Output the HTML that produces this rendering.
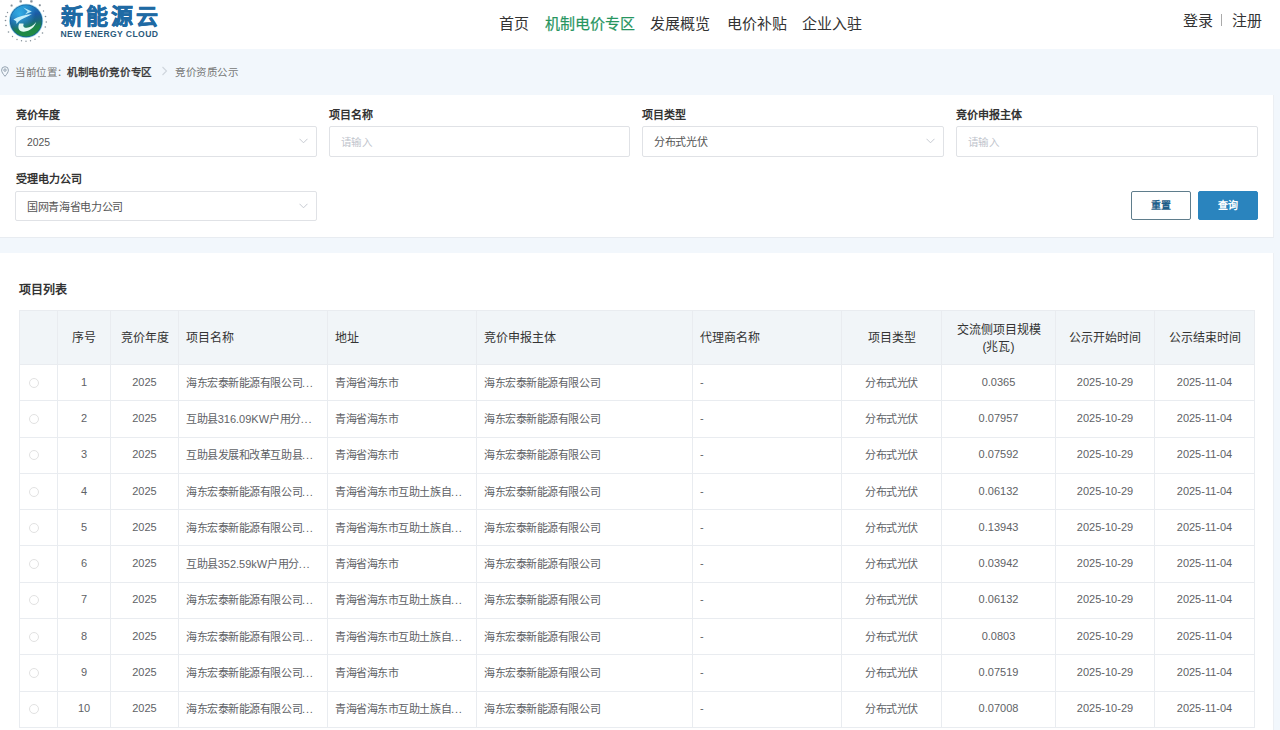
<!DOCTYPE html>
<html lang="zh-CN">
<head>
<meta charset="utf-8">
<style>
*{box-sizing:border-box;margin:0;padding:0}
html,body{width:1280px;height:730px;overflow:hidden}
body{font-family:"Liberation Sans",sans-serif;background:#f2f7fc;color:#333;position:relative}
.abs{position:absolute}
#hdr{position:absolute;left:0;top:0;width:1280px;height:49px;background:#fff}
.logo-cn{position:absolute;left:61px;top:2.5px;font-size:22px;font-weight:900;color:#1f6aa4;letter-spacing:3px;-webkit-text-stroke:0.5px #1f6aa4;line-height:28px;white-space:nowrap}
.logo-en{position:absolute;left:60.5px;top:27.5px;font-size:8.6px;font-weight:bold;color:#2b5a7c;letter-spacing:0.4px;line-height:12px;white-space:nowrap}
.nav{position:absolute;top:14px;font-size:15px;line-height:20px;color:#333;white-space:nowrap}
.nav.on{color:#27955f;-webkit-text-stroke:0.2px #27955f}
.login{position:absolute;top:11px;font-size:15px;line-height:20px;color:#333;white-space:nowrap}
.crumb{position:absolute;top:63.5px;font-size:10.5px;letter-spacing:0.6px;line-height:16px;white-space:nowrap}
#card1{position:absolute;left:0;top:95px;width:1274px;height:143px;background:#fff;border-right:1px solid #eceff3;border-bottom:1px solid #e8ecf1}
#card2{position:absolute;left:0;top:253px;width:1274px;height:480px;background:#fff;border-right:1px solid #eceff3}
.lbl{position:absolute;font-size:11px;font-weight:bold;color:#333;line-height:14px;white-space:nowrap}
.inp{position:absolute;height:31px;border:1px solid #e0e2e6;border-radius:2px;background:#fff;font-size:11px;color:#555;line-height:29px;padding-left:11px;padding-top:1px;white-space:nowrap}
.inp.ph{color:#c0c4cc;font-size:10.5px;letter-spacing:0.3px}
.arr{position:absolute;right:8px;top:11px;width:9px;height:6px}
.btn{position:absolute;top:191px;height:29px;width:60px;border-radius:2px;font-size:10px;font-weight:bold;text-align:center;line-height:27px}
#tbl{position:absolute;left:19px;top:310px;border-collapse:collapse;table-layout:fixed;font-size:11px;color:#606266}
.z{letter-spacing:-0.45px}
.dots{letter-spacing:0.8px}
#tbl td,#tbl th{border:1px solid #e9ecf0;white-space:nowrap;overflow:hidden;padding:0 7px}
#tbl th{background:#f1f5f8;height:54px;padding-top:2.5px;font-weight:normal;color:#333;font-size:12px;line-height:17px}
#tbl td{height:36.3px;padding-bottom:2px}
.c{text-align:center}
.l{text-align:left}
.radio{display:inline-block;width:10px;height:10px;border:1px solid #e2e2e2;border-radius:50%;vertical-align:middle;margin-left:-10px}
</style>
</head>
<body>
<div id="hdr">
  <svg class="abs" style="left:0px;top:0px" width="52" height="48" viewBox="0 0 52 48">
    <defs>
      <linearGradient id="lg" x1="0.2" y1="0" x2="0.45" y2="1">
        <stop offset="0" stop-color="#2196d4"/>
        <stop offset="0.4" stop-color="#1b5aa4"/>
        <stop offset="0.6" stop-color="#1a6682"/>
        <stop offset="0.8" stop-color="#1d8646"/>
        <stop offset="1" stop-color="#1f8c45"/>
      </linearGradient>
      <radialGradient id="rg" cx="0.3" cy="0.28" r="0.5">
        <stop offset="0" stop-color="#35b4ea" stop-opacity="0.9"/>
        <stop offset="1" stop-color="#35b4ea" stop-opacity="0"/>
      </radialGradient>
    </defs>
    <g fill="#6f7d88" opacity="0.85">
      <rect x="19.5" y="0.2" width="2.4" height="2.2" rx="0.6"/><rect x="30.2" y="0.2" width="2.4" height="2.2" rx="0.6"/>
      <rect x="10.6" y="4.6" width="2" height="2" rx="0.6"/><rect x="38.8" y="4.2" width="2" height="2" rx="0.6"/>
      <circle cx="7.5" cy="12.5" r="0.7"/><circle cx="43.5" cy="11" r="0.7"/>
      <circle cx="6" cy="16.5" r="0.8"/><circle cx="45.5" cy="16.5" r="0.8"/>
      <circle cx="5.5" cy="20.5" r="0.8"/><circle cx="46.3" cy="22" r="0.8"/>
      <circle cx="6" cy="25.5" r="0.8"/><circle cx="45.3" cy="27" r="0.8"/>
      <circle cx="8.5" cy="32" r="0.8"/><circle cx="42.5" cy="33" r="0.8"/>
      <circle cx="12.5" cy="36.5" r="0.7"/><circle cx="39" cy="36.8" r="0.7"/>
      <circle cx="17" cy="39.5" r="0.7"/><circle cx="21.5" cy="40.8" r="0.7"/><circle cx="26" cy="41.2" r="0.7"/><circle cx="30.5" cy="40.8" r="0.7"/><circle cx="35" cy="39.3" r="0.7"/>
    </g>
    <circle cx="26.1" cy="20.9" r="17.1" fill="#a6dcec"/>
    <circle cx="26.1" cy="20.9" r="16.3" fill="#1a5f9c"/>
    <circle cx="26.1" cy="20.9" r="15.6" fill="url(#lg)"/>
    <circle cx="26.1" cy="20.9" r="15.6" fill="url(#rg)"/>
    <path d="M23.3 7.6 L31.8 11.6 L25 14.6 L27.6 11.6 Z" fill="#b4e9f7"/>
    <path d="M13.4 19.6 C18 16.6 25 14.9 31.8 14.1 C28.3 16.6 24.3 17.6 21.3 19.6 C19.3 20.9 17.8 22.4 16.6 24 L16.2 21.3 Z" fill="#c4effa"/>
    <path d="M19.2 23.6 C17.2 28 19 32 24 31.7 C29.8 31.2 34.8 27 36.2 22 C33.2 25.6 30 27.6 26.8 27.8 C23.6 28 22.6 26 23.8 23.8 C22.2 23.4 20.6 23.3 19.2 23.6 Z" fill="#e4faf4"/>
  </svg>
  <div class="logo-cn">新能源云</div>
  <div class="logo-en">NEW ENERGY CLOUD</div>
  <div class="nav" style="left:499px">首页</div>
  <div class="nav on" style="left:545px">机制电价专区</div>
  <div class="nav" style="left:650px">发展概览</div>
  <div class="nav" style="left:727px">电价补贴</div>
  <div class="nav" style="left:802px">企业入驻</div>
  <div class="login" style="left:1183px">登录</div>
  <div class="abs" style="left:1221px;top:14px;width:1px;height:12px;background:#aaa"></div>
  <div class="login" style="left:1232px">注册</div>
</div>

<svg class="abs" style="left:1.2px;top:65.5px" width="8" height="11" viewBox="0 0 8 11">
  <path d="M4 10.3 C2 8 0.6 6 0.6 4.1 A3.4 3.4 0 0 1 7.4 4.1 C7.4 6 6 8 4 10.3 Z" fill="none" stroke="#8a9aa8" stroke-width="0.9"/>
  <circle cx="4" cy="4.1" r="1.2" fill="none" stroke="#8a9aa8" stroke-width="0.9"/>
</svg>
<div class="crumb" style="left:15px;color:#777">当前位置：</div>
<div class="crumb" style="left:67px;color:#333;-webkit-text-stroke:0.35px #333">机制电价竞价专区</div>
<svg class="abs" style="left:161px;top:66px" width="8" height="10" viewBox="0 0 8 10"><path d="M1.5 1 L5.5 5 L1.5 9" fill="none" stroke="#cfd5dc" stroke-width="1.1"/></svg>
<div class="crumb" style="left:175px;color:#777">竞价资质公示</div>

<div id="card1"></div>
<div class="lbl" style="left:15.6px;top:108px">竞价年度</div>
<div class="lbl" style="left:329px;top:108px">项目名称</div>
<div class="lbl" style="left:642px;top:108px">项目类型</div>
<div class="lbl" style="left:956px;top:108px">竞价申报主体</div>
<div class="lbl" style="left:15.6px;top:172px">受理电力公司</div>

<div class="inp" style="left:15px;top:126px;width:302px"><span style="font-size:10.4px">2025</span><svg class="arr" viewBox="0 0 9 6"><path d="M0.5 0.8 L4.5 4.8 L8.5 0.8" fill="none" stroke="#c0c4cc" stroke-width="0.9"/></svg></div>
<div class="inp ph" style="left:329px;top:126px;width:301px">请输入</div>
<div class="inp" style="left:642px;top:126px;width:302px"><span style="letter-spacing:-0.3px">分布式光伏</span><svg class="arr" viewBox="0 0 9 6"><path d="M0.5 0.8 L4.5 4.8 L8.5 0.8" fill="none" stroke="#c0c4cc" stroke-width="0.9"/></svg></div>
<div class="inp ph" style="left:956px;top:126px;width:302px">请输入</div>
<div class="inp" style="left:15px;top:191px;width:302px;height:30px;line-height:28px"><span style="letter-spacing:-0.35px">国网青海省电力公司</span><svg class="arr" viewBox="0 0 9 6"><path d="M0.5 0.8 L4.5 4.8 L8.5 0.8" fill="none" stroke="#c0c4cc" stroke-width="0.9"/></svg></div>

<div class="btn" style="left:1131px;border:1px solid #5f7d8c;color:#1e5f8a;background:#fff">重置</div>
<div class="btn" style="left:1198px;background:#2a84be;color:#fff;border:1px solid #2a84be">查询</div>

<div id="card2"></div>
<div class="lbl" style="left:19px;top:283px;font-size:12px">项目列表</div>

<table id="tbl">
<colgroup>
<col style="width:38px">
<col style="width:53px">
<col style="width:68px">
<col style="width:149px">
<col style="width:149px">
<col style="width:216px">
<col style="width:149px">
<col style="width:100px">
<col style="width:114px">
<col style="width:99px">
<col style="width:100px">
</colgroup>
<tr><th></th><th class="c">序号</th><th class="c">竞价年度</th><th class="l">项目名称</th><th class="l">地址</th><th class="l">竞价申报主体</th><th class="l">代理商名称</th><th class="c">项目类型</th><th class="c">交流侧项目规模<br>(兆瓦)</th><th class="c">公示开始时间</th><th class="c">公示结束时间</th></tr>
<tr><td class="c"><span class="radio"></span></td><td class="c">1</td><td class="c">2025</td><td><span class="z">海东宏泰新能源有限公司</span><span class="dots">...</span></td><td><span class="z">青海省海东市</span></td><td><span class="z">海东宏泰新能源有限公司</span></td><td>-</td><td class="c"><span class="z">分布式光伏</span></td><td class="c">0.0365</td><td class="c">2025-10-29</td><td class="c">2025-11-04</td></tr>
<tr><td class="c"><span class="radio"></span></td><td class="c">2</td><td class="c">2025</td><td><span class="z">互助县</span>316.09KW<span class="z">户用分</span><span class="dots">...</span></td><td><span class="z">青海省海东市</span></td><td><span class="z">海东宏泰新能源有限公司</span></td><td>-</td><td class="c"><span class="z">分布式光伏</span></td><td class="c">0.07957</td><td class="c">2025-10-29</td><td class="c">2025-11-04</td></tr>
<tr><td class="c"><span class="radio"></span></td><td class="c">3</td><td class="c">2025</td><td><span class="z">互助县发展和改革互助县</span><span class="dots">...</span></td><td><span class="z">青海省海东市</span></td><td><span class="z">海东宏泰新能源有限公司</span></td><td>-</td><td class="c"><span class="z">分布式光伏</span></td><td class="c">0.07592</td><td class="c">2025-10-29</td><td class="c">2025-11-04</td></tr>
<tr><td class="c"><span class="radio"></span></td><td class="c">4</td><td class="c">2025</td><td><span class="z">海东宏泰新能源有限公司</span><span class="dots">...</span></td><td><span class="z">青海省海东市互助土族自</span><span class="dots">...</span></td><td><span class="z">海东宏泰新能源有限公司</span></td><td>-</td><td class="c"><span class="z">分布式光伏</span></td><td class="c">0.06132</td><td class="c">2025-10-29</td><td class="c">2025-11-04</td></tr>
<tr><td class="c"><span class="radio"></span></td><td class="c">5</td><td class="c">2025</td><td><span class="z">海东宏泰新能源有限公司</span><span class="dots">...</span></td><td><span class="z">青海省海东市互助土族自</span><span class="dots">...</span></td><td><span class="z">海东宏泰新能源有限公司</span></td><td>-</td><td class="c"><span class="z">分布式光伏</span></td><td class="c">0.13943</td><td class="c">2025-10-29</td><td class="c">2025-11-04</td></tr>
<tr><td class="c"><span class="radio"></span></td><td class="c">6</td><td class="c">2025</td><td><span class="z">互助县</span>352.59kW<span class="z">户用分</span><span class="dots">...</span></td><td><span class="z">青海省海东市</span></td><td><span class="z">海东宏泰新能源有限公司</span></td><td>-</td><td class="c"><span class="z">分布式光伏</span></td><td class="c">0.03942</td><td class="c">2025-10-29</td><td class="c">2025-11-04</td></tr>
<tr><td class="c"><span class="radio"></span></td><td class="c">7</td><td class="c">2025</td><td><span class="z">海东宏泰新能源有限公司</span><span class="dots">...</span></td><td><span class="z">青海省海东市互助土族自</span><span class="dots">...</span></td><td><span class="z">海东宏泰新能源有限公司</span></td><td>-</td><td class="c"><span class="z">分布式光伏</span></td><td class="c">0.06132</td><td class="c">2025-10-29</td><td class="c">2025-11-04</td></tr>
<tr><td class="c"><span class="radio"></span></td><td class="c">8</td><td class="c">2025</td><td><span class="z">海东宏泰新能源有限公司</span><span class="dots">...</span></td><td><span class="z">青海省海东市互助土族自</span><span class="dots">...</span></td><td><span class="z">海东宏泰新能源有限公司</span></td><td>-</td><td class="c"><span class="z">分布式光伏</span></td><td class="c">0.0803</td><td class="c">2025-10-29</td><td class="c">2025-11-04</td></tr>
<tr><td class="c"><span class="radio"></span></td><td class="c">9</td><td class="c">2025</td><td><span class="z">海东宏泰新能源有限公司</span><span class="dots">...</span></td><td><span class="z">青海省海东市</span></td><td><span class="z">海东宏泰新能源有限公司</span></td><td>-</td><td class="c"><span class="z">分布式光伏</span></td><td class="c">0.07519</td><td class="c">2025-10-29</td><td class="c">2025-11-04</td></tr>
<tr><td class="c"><span class="radio"></span></td><td class="c">10</td><td class="c">2025</td><td><span class="z">海东宏泰新能源有限公司</span><span class="dots">...</span></td><td><span class="z">青海省海东市互助土族自</span><span class="dots">...</span></td><td><span class="z">海东宏泰新能源有限公司</span></td><td>-</td><td class="c"><span class="z">分布式光伏</span></td><td class="c">0.07008</td><td class="c">2025-10-29</td><td class="c">2025-11-04</td></tr>
</table>
</body>
</html>
